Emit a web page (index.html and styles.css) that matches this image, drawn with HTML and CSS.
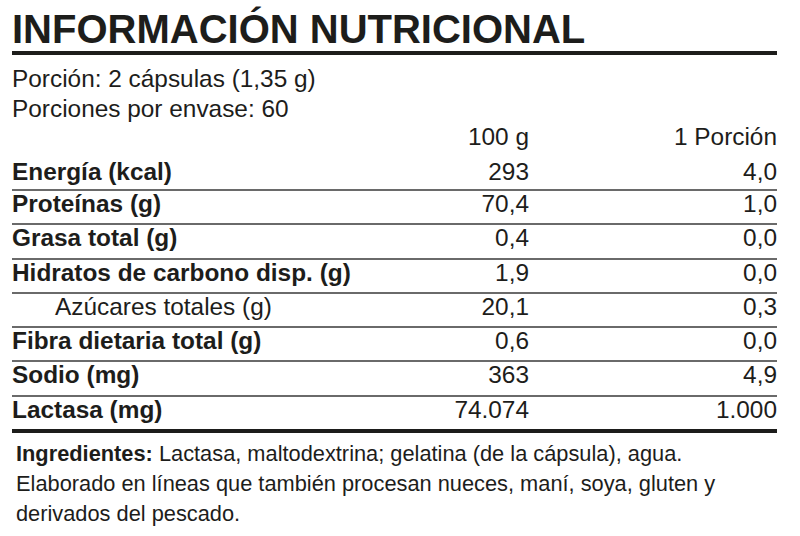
FILE: index.html
```html
<!DOCTYPE html>
<html lang="es">
<head>
<meta charset="utf-8">
<link rel="stylesheet" href="styles.css">
</head>
<body>
<main class="label">
  <h1 class="title">INFORMACIÓN NUTRICIONAL</h1>
  <div class="serving">
    <p>Porción: 2 cápsulas (1,35 g)</p>
    <p>Porciones por envase: 60</p>
  </div>
  <div class="row head">
    <span></span><span class="num">100 g</span><span class="num">1 Porción</span>
  </div>
  <div class="rows">
    <div class="row first"><span class="name">Energía (kcal)</span><span class="num">293</span><span class="num">4,0</span></div>
    <div class="row"><span class="name">Proteínas (g)</span><span class="num">70,4</span><span class="num">1,0</span></div>
    <div class="row"><span class="name">Grasa total (g)</span><span class="num">0,4</span><span class="num">0,0</span></div>
    <div class="row"><span class="name">Hidratos de carbono disp. (g)</span><span class="num">1,9</span><span class="num">0,0</span></div>
    <div class="row"><span class="name sub">Azúcares totales (g)</span><span class="num">20,1</span><span class="num">0,3</span></div>
    <div class="row"><span class="name">Fibra dietaria total (g)</span><span class="num">0,6</span><span class="num">0,0</span></div>
    <div class="row"><span class="name">Sodio (mg)</span><span class="num">363</span><span class="num">4,9</span></div>
    <div class="row last"><span class="name">Lactasa (mg)</span><span class="num">74.074</span><span class="num">1.000</span></div>
  </div>
  <p class="ingredients"><b>Ingredientes:</b> Lactasa, maltodextrina; gelatina (de la cápsula), agua.<br>Elaborado en líneas que también procesan nueces, maní, soya, gluten y<br>derivados del pescado.</p>
</main>
</body>
</html>
```

FILE: styles.css
```css
* { box-sizing: border-box; }
html, body { margin: 0; padding: 0; background: #fff; }
body {
  font-family: "Liberation Sans", Arial, sans-serif;
  color: #1d1d1b;
}
.label {
  width: 765px;
  margin-left: 12px;
  display: flex;
  flex-direction: column;
}
.title {
  margin: 0;
  padding: 9px 0 2px 0;
  font-size: 40px;
  line-height: 40px;
  font-weight: 700;
  border-bottom: 4px solid #1d1d1b;
}
.serving {
  margin-top: 8.7px;
}
.serving p {
  margin: 0;
  font-size: 24.4px;
  line-height: 30px;
}
.row {
  display: grid;
  grid-template-columns: 357px 160px 248px;
  font-size: 24.4px;
  line-height: 26px;
  height: 34.3px;
  padding-bottom: 6.3px;
  border-bottom: 2px solid #6a6a6a;
}
.row.head {
  border-bottom: none;
  height: 26px;
  padding-bottom: 0;
}
.rows { margin-top: 9px; }
.row.first { height: 32.3px; padding-bottom: 4.3px; }
.row.last {
  height: 36.3px;
  border-bottom: 4px solid #1d1d1b;
}
.name { font-weight: 700; white-space: nowrap; }
.name.sub { font-weight: 400; padding-left: 43px; }
.num { text-align: right; white-space: nowrap; }
.ingredients {
  margin: 6px 0 0 0;
  padding-left: 4px;
  font-size: 21.8px;
  line-height: 30px;
  white-space: nowrap;
}
```
